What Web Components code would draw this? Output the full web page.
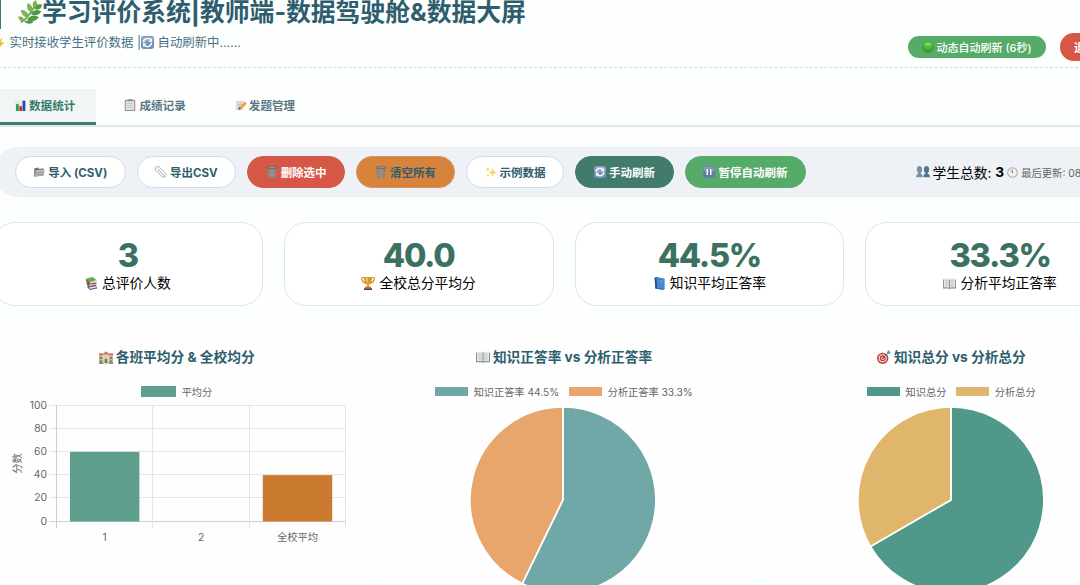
<!DOCTYPE html>
<html lang="zh-CN">
<head>
<meta charset="utf-8">
<title>学习评价系统</title>
<style>
  body {
    margin: 0;
    height: 585px;
    overflow: hidden;
    background: #fdfefe;
    font-family: Inter, "Noto Sans CJK SC", sans-serif;
  }
</style>
</head>
<body>
<dashboard-page></dashboard-page>

<script>
// every drawing uses a 16x16 box
const ICONS = {
  leaf: `<path d="M2 15Q8 11 12 2" stroke="#4f8f32" stroke-width="1" fill="none"/><g fill="#7cb455"><path d="M11.500 6Q8 3 11.500 0Q14.500 3 11.500 6M9.500 9Q4.500 6 6.500 2Q11 4 9.500 9M7 12Q2 11 2 6.500Q7.500 7 7 12M4.500 14.500Q1 15 0 11Q4 10.500 4.500 14.500"/></g><g fill="#4f9a43"><path d="M11 6Q12 2 16 3Q15.500 7.500 11 6M8.500 9.500Q11 5 15.500 7.500Q13.500 11.500 8.500 9.500M6 13Q9.500 8.500 14 11.500Q11 15.500 6 13M4 14.500Q7 12.500 10.500 14.500Q8 17 4 14.500"/></g>`,
  bolt: `<path d="M12 0L3 9H8L5 16L14 7H9Z" fill="#f9b937"/>`,
  refresh: `<rect width="16" height="16" rx="3" fill="#7590b5"/><rect x=".5" y=".5" width="15" height="7" rx="3" fill="#91a8c7"/><path d="M3 8A5 5 0 0 1 12 5M13 8A5 5 0 0 1 4 11" fill="none" stroke="#fff" stroke-width="1.8"/><path d="M13.5 2.5V7H9zM2.500 13.500V9H7z" fill="#fff"/>`,
  green: `<circle cx="8" cy="8" r="7.8" fill="#3f9c2c"/><ellipse cx="8" cy="6" rx="6.500" ry="5" fill="#55b83c"/><ellipse cx="8" cy="4" rx="4.500" ry="2.500" fill="#74d95a"/>`,
  bars: `<rect width="16" height="16" fill="#e9edef"/><path d="M0 4H16M0 8H16M0 12H16" stroke="#cdd4d9" stroke-width=".6"/><rect x="1.500" y="6" width="4" height="10" fill="#2e9d48"/><rect x="6.300" y="9" width="4" height="7" fill="#c83228"/><rect x="11" y="1" width="4" height="15" fill="#2349b0"/>`,
  clipboard: `<rect x="1" y="1" width="14" height="15" rx="1" fill="#a7927f"/><rect x="2.500" y="3" width="11" height="11.500" fill="#e2e5e7"/><rect x="5" y="0" width="6" height="3" rx="1" fill="#8d979f"/><path d="M4 6H12M4 8.500H12M4 11H12" stroke="#b4bbc0" stroke-width=".8"/>`,
  memo: `<path d="M1 1H13V15H1Z" fill="#e0e4e6"/><path d="M3 4H11M3 6.500H11M3 9H8M3 12H6" stroke="#a7b0b8" stroke-width=".9"/><path d="M5 14L6 10L13 4L16 7L9 13Z" fill="#eda831"/><path d="M13 4L14.500 2.700L16 4V7Z" fill="#dd746c"/><path d="M5 14L6 10L9 13Z" fill="#675340"/>`,
  folder: `<path d="M1 14L2 3L7 2L8 4L14 3V13Z" fill="#6d7377"/><path d="M1 14L4 6L16 4.500L13 13Z" fill="#a4aaad"/><path d="M4 6L16 4.500L15.500 6L4 7.500Z" fill="#c5cacc"/>`,
  clip: `<path d="M4 4L11 12A2 2 0 0 0 14 10L6 1.500A3 3 0 0 0 1.500 6L9 14A4 4 0 0 0 15 13" fill="none" stroke="#a2a9af" stroke-width="1.300"/>`,
  trash: `<path d="M1.500 3H14.500L13 16H3Z" fill="#8d8078"/><path d="M3 5L13 14M6 4L13 10M3 9L9 15M13 5L3 14M10 4L3 10M13 9L7 15M8 4V15" stroke="#b09e91" stroke-width=".7"/><ellipse cx="8" cy="2" rx="7.500" ry="1.800" fill="#686d70"/><ellipse cx="8" cy="1.900" rx="5.500" ry=".8" fill="#9a8c80"/>`,
  sparkle: `<g fill="#fbd565"><path d="M10 2Q10.500 7.500 16 8.500Q10.500 9.500 10 15Q9.500 9.500 5 8.500Q9.500 7.500 10 2"/><path d="M4 1Q4 4 7 4.500Q4 5 4 8Q3.500 5 1 4.500Q3.500 4 4 1M4 10Q4 12 6 12.500Q4 13 4 15Q3.500 13 2 12.500Q3.500 12 4 10"/></g>`,
  pause: `<rect width="16" height="16" rx="3" fill="#607e9e"/><rect x=".5" y=".5" width="15" height="7" rx="3" fill="#7d98b5"/><path d="M5.700 4V12M10.300 4V12" stroke="#fff" stroke-width="2"/>`,
  people: `<g fill="#7192ab"><ellipse cx="4" cy="5" rx="3" ry="4"/><path d="M0 14Q0 10 4 9.500Q7.700 10 7.700 14Z"/></g><g fill="#53758f"><ellipse cx="12" cy="5" rx="3" ry="4"/><path d="M8.300 14Q8.300 10 12 9.500Q16 10 16 14Z"/></g><path d="M2.800 8H5.200V11H2.800Z" fill="#7192ab"/><path d="M10.800 8H13.200V11H10.800Z" fill="#53758f"/>`,
  clock: `<circle cx="8" cy="8" r="7" fill="#f2f2f1" stroke="#a6aaac" stroke-width="1.500"/><path d="M8 8V3M8 8L5 5" stroke="#777" stroke-width="1"/><circle cx="8" cy="8" r="1" fill="#888"/>`,
  books: `<path d="M3 10L12 9L15 12V14L6 16L3 13Z" fill="#496f9b"/><path d="M5 13L15 11V12.500L6 14.500Z" fill="#eee"/><path d="M2 6L11 5L14 8V10L5 12L2 9Z" fill="#b63c3b"/><path d="M5 9.500L14 8V9L5 11Z" fill="#eee"/><path d="M1 2L9 0L15 4L6 6Z" fill="#63a758"/><path d="M1 2L6 6V8L1 5ZM6 8L14 6.500V7.500L6 9Z" fill="#397e3c"/><path d="M6 6L15 4V6L6 8Z" fill="#e9ead9"/>`,
  trophy: `<path d="M4 2Q0 1 1 4Q2 8 6 8M12 2Q16 1 15 4Q14 8 10 8" fill="none" stroke="#c99025" stroke-width="1.300"/><path d="M3.500 1H12.500Q13 8 9 10V13H7V10Q3 8 3.500 1" fill="#d49a29"/><path d="M5.500 2H7.500V8Q5.500 6 5.500 2" fill="#f6d36d"/><path d="M5 12H11L12 14H4Z" fill="#b57b20"/><path d="M3.500 14H12.500V16H3.500Z" fill="#71352a"/>`,
  bluebook: `<path d="M2 1L4 0L14 2V15L12 16L3 14Z" fill="#2b609b"/><path d="M4 1L14 2.500V15L5 13.500Z" fill="#438acb"/><path d="M2 1L4 2L5 14L3 14Z" fill="#244d7c"/><path d="M8 4L12 4.500V6L8 5.500Z" fill="#71aadd"/>`,
  openbook: `<path d="M0 3H16V14H9L8 15L7 14H0Z" fill="#70899c"/><path d="M1 2Q5 1 8 3Q11 1 15 2V13Q11 12 8 13.500Q5 12 1 13Z" fill="#e4e5e5"/><path d="M8 3V13.500" stroke="#767c82" stroke-width="1"/><path d="M3 4.500H6.500M3 6.500H6.500M3 8.500H6.500M3 10.500H6.500M9.500 4.500H13M9.500 6.500H13M9.500 8.500H13M9.500 10.500H13" stroke="#afb4b7" stroke-width=".7"/>`,
  school: `<path d="M0 6H16V15H0Z" fill="#cdb889"/><path d="M0 4H16V6H0Z" fill="#c5644e"/><path d="M4.500 5L8 2L11.500 5V15H4.500Z" fill="#ead9a8"/><path d="M4 5L8 1.500L12 5Z" fill="#b8776a"/><circle cx="8" cy="6.500" r="1.500" fill="#fff" stroke="#876" stroke-width=".5"/><path d="M1 8H3.500V10H1ZM12.500 8H15V10H12.500ZM1 12H3.500V14H1ZM12.500 12H15V14H12.500ZM6.500 10H9.500V15H6.500Z" fill="#66777c"/><path d="M0 14H5V16H0ZM11 14H16V16H11Z" fill="#7f9a66"/>`,
  dart: `<circle cx="6.500" cy="9.500" r="6.500" fill="#c63b37"/><circle cx="6.500" cy="9.500" r="4.700" fill="#eee5e2"/><circle cx="6.500" cy="9.500" r="3.400" fill="#c63b37"/><circle cx="6.500" cy="9.500" r="1.900" fill="#eee5e2"/><circle cx="6.500" cy="9.500" r="1" fill="#c63b37"/><path d="M6.500 9.500L13 3" stroke="#555e65" stroke-width="1"/><path d="M11 5L12 1.500L14 0V2L16 2L14.500 4Z" fill="#3ba5b8"/>`,
};

class EmojiIcon extends HTMLElement {
  constructor() {
    super();
    this.attachShadow({ mode: "open" });
  }

  connectedCallback() {
    const size = this.getAttribute("size") || 12;
    this.shadowRoot.innerHTML = `
      <style>
        :host { display: inline-block; flex: none; width: ${size}px; height: ${size}px; white-space: normal; }
        svg { display: block; width: 100%; height: 100%; }
      </style>
      <svg viewBox="0 0 16 16">${ICONS[this.getAttribute("name")]}</svg>
    `;
  }
}

class PageHeader extends HTMLElement {
  constructor() {
    super();
    this.attachShadow({ mode: "open" });
    this.shadowRoot.innerHTML = `
      <style>
        :host {
          display: flex;
          justify-content: space-between;
          height: 67px;
          width: 1120px;
          border-bottom: 1px dashed #cbdce5;
          color: #2e5e6e;
        }

        h1 {
          display: flex;
          align-items: center;
          margin: 0;
          height: 24px;
          padding: 0 0 5px 17px;
          border-left: 8px solid #3f7c6b;
          font-size: 24.8px;
          line-height: 24px;
          font-weight: 700;
          white-space: nowrap;
        }

        p {
          display: flex;
          align-items: center;
          margin: 5px 0 0 1px;
          height: 17px;
          font-size: 12.4px;
          line-height: 17px;
          color: #4a6f7e;
          white-space: pre;
        }

        p emoji-icon:first-child { margin-right: 3.5px; }

        .actions {
          display: flex;
          align-items: center;
          gap: 14px;
          height: 28px;
          margin-top: 33px;
          width: 205px;
          color: #fff;
          font-size: 11px;
          font-weight: 500;
          white-space: nowrap;
        }

        .badge {
          box-sizing: border-box;
          display: flex;
          align-items: center;
          gap: 2.5px;
          width: 138px;
          height: 22px;
          padding-left: 14px;
          padding-bottom: 1px;
          border-radius: 11px;
          background: #56ab69;
        }

        .exit {
          height: 28px;
          width: 52px;
          flex: none;
          box-sizing: border-box;
          padding: 0 0 1px 14px;
          border: 0;
          border-radius: 14px;
          background: #d65745;
          color: inherit;
          font: inherit;
          font-weight: 600;
          text-align: left;
        }
      </style>
      <div>
        <h1><emoji-icon name="leaf" size="24"></emoji-icon><span>学习评价系统|教师端-数据驾驶舱&amp;数据大屏</span></h1>
        <p><emoji-icon name="bolt" size="12"></emoji-icon><span>实时接收学生评价数据 |</span><emoji-icon name="refresh" size="13"></emoji-icon><span> 自动刷新中......</span></p>
      </div>
      <div class="actions">
        <div class="badge"><emoji-icon name="green" size="12"></emoji-icon><span>动态自动刷新 (6秒)</span></div>
        <button class="exit">退出</button>
      </div>
    `;
  }
}

class TabItem extends HTMLElement {
  constructor() {
    super();
    this.attachShadow({ mode: "open" });
    this.shadowRoot.innerHTML = `
      <style>
        :host {
          box-sizing: border-box;
          display: flex;
          align-items: center;
          gap: 3px;
          height: 36px;
          padding: 0 21px 4px 22px;
          font-size: 11.6px;
          font-weight: 600;
          color: #5a7684;
          white-space: nowrap;
        }

        :host([active]) {
          color: #3b7a68;
          background: #f0f6f5;
          border-bottom: 3px solid #3f7c6b;
          padding-bottom: 1px;
        }
      </style>
      <slot></slot>
    `;
  }
}

class PillButton extends HTMLElement {
  constructor() {
    super();
    this.attachShadow({ mode: "open" });
    this.shadowRoot.innerHTML = `
      <style>
        :host {
          box-sizing: border-box;
          display: flex;
          flex: none;
          align-items: center;
          justify-content: center;
          gap: 3px;
          height: 32px;
          border: 1px solid #cbdfe9;
          border-radius: 16px;
          background: #fff;
          color: #2e5e6e;
          font-size: 11.5px;
          font-weight: 700;
          white-space: nowrap;
        }

        :host([kind]) { color: #fff; }
        :host([kind="danger"]) { background: #d65745; border-color: #d65745; }
        :host([kind="warn"]) { background: #d7833c; border-color: #d99455; color: #2e5e6e; }
        :host([kind="primary"]) { background: #407b6b; border-color: #407b6b; }
        :host([kind="success"]) { background: #56ab69; border-color: #56ab69; }
      </style>
      <slot></slot>
    `;
  }
}

class StatCard extends HTMLElement {
  constructor() {
    super();
    this.attachShadow({ mode: "open" });
    this.shadowRoot.innerHTML = `
      <style>
        :host {
          box-sizing: border-box;
          display: flex;
          flex-direction: column;
          align-items: center;
          height: 84px;
          padding-top: 15px;
          border: 1px solid #d8e7ee;
          border-radius: 22px;
          background: #fff;
        }

        .value {
          height: 35px;
          line-height: 35px;
          font-size: 32.5px;
          font-weight: 800;
          letter-spacing: -1.3px;
          color: #3b7160;
        }

        .label {
          display: flex;
          align-items: center;
          gap: 4px;
          height: 20px;
          line-height: 20px;
          font-size: 13.75px;
          color: #000;
        }
      </style>
      <div class="value"><slot name="value"></slot></div>
      <div class="label"><slot></slot></div>
    `;
  }
}

class ChartCard extends HTMLElement {
  constructor() {
    super();
    this.attachShadow({ mode: "open" });
    this.shadowRoot.innerHTML = `
      <style>
        :host {
          display: block;
          height: 270px;
          border-radius: 22px;
          background: #fefefe;
        }

        h3 {
          display: flex;
          align-items: center;
          justify-content: center;
          gap: 3px;
          height: 20px;
          margin: 0;
          padding-top: 14px;
          font-size: 13.7px;
          line-height: 20px;
          font-weight: 700;
          color: #2e5e6e;
        }

        .legend {
          display: flex;
          align-items: center;
          justify-content: center;
          gap: 10px;
          height: 16px;
          margin-top: 16.5px;
          margin-bottom: 0.5px;
        }
      </style>
      <h3><slot name="title"></slot></h3>
      <div class="legend"><slot name="legend"></slot></div>
      <slot></slot>
    `;
  }
}

class LegendItem extends HTMLElement {
  constructor() {
    super();
    this.attachShadow({ mode: "open" });
    this.shadowRoot.innerHTML = `
      <style>
        :host {
          display: flex;
          align-items: center;
          gap: 5.5px;
          font-size: 10.2px;
          line-height: 16px;
          color: #666;
          white-space: nowrap;
        }

        i { width: 33px; height: 9px; background: var(--swatch); }
        :host([large]) i { width: 35px; height: 11px; }
      </style>
      <i></i><span><slot></slot></span>
    `;
  }
}

class BarChart extends HTMLElement {
  constructor() {
    super();
    this.attachShadow({ mode: "open" });
  }

  connectedCallback() {
    const bars = [
      { label: "1", value: 60, color: "#5f9f8d" },
      { label: "2", value: 0, color: "#5f9f8d" },
      { label: "全校平均", value: 40, color: "#ca7b2f" },
    ];
    const left = 63.5, bottom = 122, step = 96.4, unit = 1.16;
    let grid = "";
    let marks = "";

    for (let v = 0; v <= 100; v += 20) {
      const y = Math.floor(bottom - v * unit) - 0.5;
      grid += `<path d="M${left - 7} ${y}H${left + step * 3}" stroke="${v ? "#e5e5e5" : "#cfcfcf"}"/>`;
      marks += `<text x="54" y="${y + 3.8}" text-anchor="end">${v}</text>`;
    }
    for (let i = 0; i <= 3; i++) {
      const x = Math.floor(left + i * step) + 0.5;
      grid += `<path d="M${x} 5V128" stroke="${i ? "#e5e5e5" : "#cfcfcf"}"/>`;
    }
    bars.forEach((bar, i) => {
      const x = left + step * (i + 0.5);
      const h = bar.value * unit;
      marks += `<rect x="${x - 34.7}" y="${bottom - 0.5 - h}" width="69.4" height="${h}" fill="${bar.color}"/>`;
      marks += `<text x="${x}" y="140.5" text-anchor="middle">${bar.label}</text>`;
    });

    this.shadowRoot.innerHTML = `
      <style>
        :host { display: block; }
        svg { display: block; }
        text { font-size: 10.3px; fill: #666; }
      </style>
      <svg width="367" height="185" fill="none">
        ${grid}${marks}
        <text transform="translate(28 63.500) rotate(-90)" text-anchor="middle">分数</text>
      </svg>
    `;
  }
}

class PieChart extends HTMLElement {
  constructor() {
    super();
    this.attachShadow({ mode: "open" });
  }

  connectedCallback() {
    const [a, b] = this.getAttribute("values").split(",").map(Number);
    const [first, second] = this.getAttribute("colors").split(",");
    const cx = 182.9, cy = 99.9, r = 93;
    const angle = (a / (a + b)) * Math.PI * 2;
    const x = cx + r * Math.sin(angle);
    const y = cy - r * Math.cos(angle);

    this.shadowRoot.innerHTML = `
      <style>
        :host { display: block; }
        svg { display: block; }
        path { stroke: #fff; stroke-width: 1.7; stroke-linejoin: round; }
      </style>
      <svg width="367" height="200">
        <path fill="${first}" d="M${cx} ${cy}V${cy - r}A${r} ${r} 0 1 1 ${x} ${y}Z"/>
        <path fill="${second}" d="M${cx} ${cy}L${x} ${y}A${r} ${r} 0 0 1 ${cx} ${cy - r}Z"/>
      </svg>
    `;
  }
}

class DashboardPage extends HTMLElement {
  constructor() {
    super();
    this.attachShadow({ mode: "open" });
    this.shadowRoot.innerHTML = `
      <style>
        :host {
          display: block;
          width: 1142px;
          margin-left: -7px;
        }

        nav {
          display: flex;
          gap: 6px;
          height: 36px;
          margin-top: 21px;
          border-bottom: 2px solid #e0e8ef;
        }

        .toolbar {
          box-sizing: border-box;
          display: flex;
          align-items: center;
          gap: 10.9px;
          height: 50px;
          margin-top: 20px;
          padding-left: 21.5px;
          border-radius: 25px;
          background: #eef2f7;
        }

        .summary {
          display: flex;
          align-items: center;
          margin-left: 98.5px;
          font-size: 13.75px;
          white-space: pre;
        }

        .summary span { margin-left: -1px; }
        .summary b { font-weight: 700; margin-right: 3px; }
        .summary small { font-size: 10.3px; color: #666; margin-left: 3px; }

        .stats {
          display: grid;
          grid-template-columns: repeat(4, 1fr);
          gap: 21px;
          margin-top: 25px;
        }

        .charts {
          display: grid;
          grid-template-columns: repeat(3, 1fr);
          gap: 20px;
          margin-top: 27px;
        }
      </style>

      <page-header></page-header>

      <nav>
        <tab-item active><emoji-icon name="bars" size="11"></emoji-icon><span>数据统计</span></tab-item>
        <tab-item><emoji-icon name="clipboard" size="12"></emoji-icon><span>成绩记录</span></tab-item>
        <tab-item><emoji-icon name="memo" size="11"></emoji-icon><span>发题管理</span></tab-item>
      </nav>

      <div class="toolbar">
        <pill-button style="width:111.500px"><emoji-icon name="folder"></emoji-icon><span>导入 (CSV)</span></pill-button>
        <pill-button style="width:99px"><emoji-icon name="clip"></emoji-icon><span>导出CSV</span></pill-button>
        <pill-button kind="danger" style="width:98.700px"><emoji-icon name="trash"></emoji-icon><span>删除选中</span></pill-button>
        <pill-button kind="warn" style="width:98.500px"><emoji-icon name="trash"></emoji-icon><span>清空所有</span></pill-button>
        <pill-button style="width:98.500px"><emoji-icon name="sparkle"></emoji-icon><span>示例数据</span></pill-button>
        <pill-button kind="primary" style="width:98.700px"><emoji-icon name="refresh"></emoji-icon><span>手动刷新</span></pill-button>
        <pill-button kind="success" style="width:121.500px"><emoji-icon name="pause"></emoji-icon><span>暂停自动刷新</span></pill-button>
        <div class="summary"><emoji-icon name="people" size="14"></emoji-icon><span> 学生总数: </span><b>3</b><emoji-icon name="clock" size="11"></emoji-icon><small>最后更新: 08</small></div>
      </div>

      <div class="stats">
        <stat-card><span slot="value">3</span><emoji-icon name="books" size="13"></emoji-icon><span>总评价人数</span></stat-card>
        <stat-card><span slot="value">40.0</span><emoji-icon name="trophy" size="14"></emoji-icon><span>全校总分平均分</span></stat-card>
        <stat-card><span slot="value">44.5%</span><emoji-icon name="bluebook" size="13"></emoji-icon><span>知识平均正答率</span></stat-card>
        <stat-card><span slot="value">33.3%</span><emoji-icon name="openbook" size="13"></emoji-icon><span>分析平均正答率</span></stat-card>
      </div>

      <div class="charts">
        <chart-card>
          <emoji-icon slot="title" name="school" size="14"></emoji-icon><span slot="title">各班平均分 &amp; 全校均分</span>
          <legend-item slot="legend" large style="--swatch:#5f9f8d">平均分</legend-item>
          <bar-chart></bar-chart>
        </chart-card>
        <chart-card>
          <emoji-icon slot="title" name="openbook" size="14"></emoji-icon><span slot="title">知识正答率 vs 分析正答率</span>
          <legend-item slot="legend" style="--swatch:#70a8a7">知识正答率 44.5%</legend-item>
          <legend-item slot="legend" style="--swatch:#e8a66d">分析正答率 33.3%</legend-item>
          <pie-chart values="44.5,33.3" colors="#70a8a7,#e8a66d"></pie-chart>
        </chart-card>
        <chart-card>
          <emoji-icon slot="title" name="dart" size="14"></emoji-icon><span slot="title">知识总分 vs 分析总分</span>
          <legend-item slot="legend" style="--swatch:#50998a">知识总分</legend-item>
          <legend-item slot="legend" style="--swatch:#e0b56c">分析总分</legend-item>
          <pie-chart values="2,1" colors="#50998a,#e0b56c"></pie-chart>
        </chart-card>
      </div>
    `;
  }
}

customElements.define("emoji-icon", EmojiIcon);
customElements.define("page-header", PageHeader);
customElements.define("tab-item", TabItem);
customElements.define("pill-button", PillButton);
customElements.define("stat-card", StatCard);
customElements.define("legend-item", LegendItem);
customElements.define("bar-chart", BarChart);
customElements.define("pie-chart", PieChart);
customElements.define("chart-card", ChartCard);
customElements.define("dashboard-page", DashboardPage);
</script>
</body>
</html>
